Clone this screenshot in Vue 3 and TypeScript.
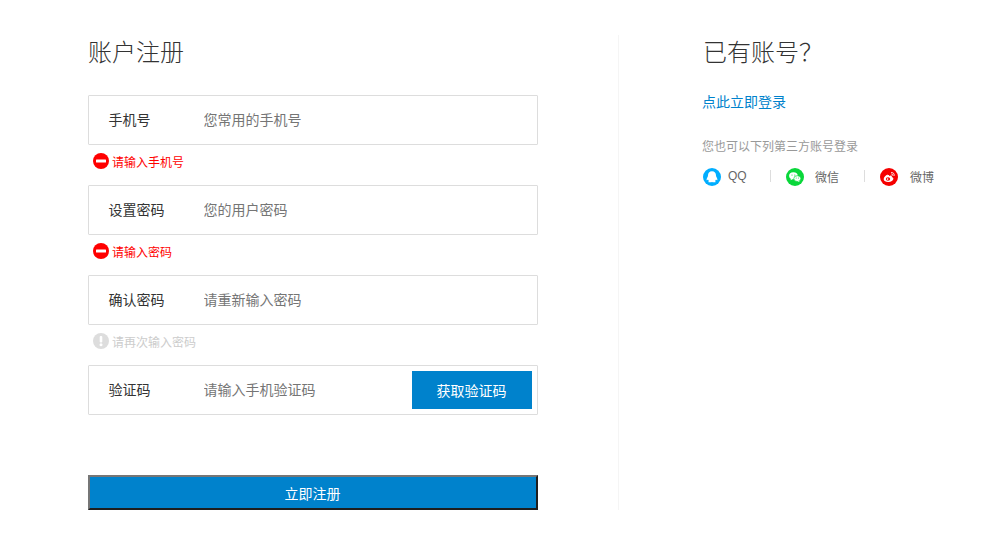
<script setup lang="ts">
interface Field { label: string; placeholder: string; tip?: string; tipKind?: 'error' | 'info'; code?: boolean }
const fields: Field[] = [
  { label: '手机号', placeholder: '您常用的手机号', tip: '请输入手机号', tipKind: 'error' },
  { label: '设置密码', placeholder: '您的用户密码', tip: '请输入密码', tipKind: 'error' },
  { label: '确认密码', placeholder: '请重新输入密码', tip: '请再次输入密码', tipKind: 'info' },
  { label: '验证码', placeholder: '请输入手机验证码', code: true },
]
</script>

<template>
  <div class="page">
    <form class="left" @submit.prevent>
      <h2 class="title">账户注册</h2>
      <div class="fields">
        <div v-for="f in fields" :key="f.label" class="field">
          <div class="box">
            <label class="label">{{ f.label }}</label>
            <input class="input" :placeholder="f.placeholder" />
            <button v-if="f.code" type="button" class="code">获取验证码</button>
          </div>
          <div class="tip" :class="f.tipKind">
            <template v-if="f.tip">
              <svg v-if="f.tipKind === 'error'" class="tip-icon" viewBox="0 0 16 16">
                <circle cx="8" cy="8" r="8" fill="#f00" />
                <rect x="3" y="6.5" width="10" height="3" rx="0.5" fill="#fff" />
              </svg>
              <svg v-else class="tip-icon" viewBox="0 0 16 16">
                <circle cx="8" cy="8" r="8" fill="#ddd" />
                <rect x="6.7" y="3" width="2.6" height="6.5" rx="1" fill="#fff" />
                <circle cx="8" cy="11.7" r="1.5" fill="#fff" />
              </svg>
              <span class="tip-text">{{ f.tip }}</span>
            </template>
          </div>
        </div>
      </div>
      <button class="submit" type="submit">立即注册</button>
    </form>

    <aside class="right">
      <h2 class="title">已有账号？</h2>
      <a class="login" href="#">点此立即登录</a>
      <p class="hint">您也可以下列第三方账号登录</p>
      <div class="socials">
        <a class="social qq" href="#">
          <svg class="s-icon" viewBox="0 0 18 18">
            <circle cx="9" cy="9" r="9" fill="#00aeff" />
            <path d="M9 3.2c-2.600 0-4 1.900-4 4.200 0 .9-.3 1.400-.7 2.100-.5.900-.9 1.900-.6 2.700.3.300.9-.200 1.300-.800.300.800.600 1.300 1.100 1.700-.500.200-.900.500-.700.900.300.400 2.600.500 3.600.100 1 .400 3.300.300 3.600-.100.200-.400-.200-.700-.700-.900.500-.400.800-.900 1.100-1.700.400.600 1 1.100 1.300.800.300-.800-.100-1.800-.600-2.700-.400-.700-.700-1.200-.700-2.100 0-2.300-1.400-4.200-4-4.200z" fill="#fff" />
          </svg>
          <span class="s-text">QQ</span>
        </a>
        <i class="sep"></i>
        <a class="social wechat" href="#">
          <svg class="s-icon" viewBox="0 0 18 18">
            <circle cx="9" cy="9" r="9" fill="#09d73a" />
            <ellipse cx="7.400" cy="7.800" rx="4.300" ry="3.500" fill="#fff" />
            <path d="M5 10.500 4.600 12.300 6.800 11z" fill="#fff" />
            <ellipse cx="11.300" cy="10.600" rx="3.500" ry="2.900" fill="#fff" stroke="#09d73a" stroke-width="0.700" />
            <path d="M13 12.600 13.500 14 11.800 13.200z" fill="#fff" />
            <circle cx="6" cy="7" r=".6" fill="#09d73a" />
            <circle cx="8.800" cy="7" r=".6" fill="#09d73a" />
            <circle cx="10.200" cy="10" r=".5" fill="#09d73a" />
            <circle cx="12.400" cy="10" r=".5" fill="#09d73a" />
          </svg>
          <span class="s-text s-text-wide">微信</span>
        </a>
        <i class="sep"></i>
        <a class="social weibo" href="#">
          <svg class="s-icon" viewBox="0 0 18 18">
            <circle cx="9" cy="9" r="9" fill="#f50000" />
            <path d="M7.800 6.400C5.600 7.300 3.600 9.300 3.700 11.200c.1 1.800 2.300 2.900 4.700 2.800 2.600-.1 5-1.500 5-3.200 0-1-1-1.500-1.700-1.700.4-.9.200-1.600-.6-1.700-.7-.1-1.500.200-2.100.500.2-.800 0-1.500-1.200-.500z" fill="#fff" />
            <ellipse cx="8" cy="11" rx="2.200" ry="1.700" fill="#f50000" />
            <circle cx="7.600" cy="11.100" r=".8" fill="#fff" />
            <path d="M11.500 4.500c1.700-.2 3.100 1.200 2.700 3M11.700 6c.9-.1 1.400.6 1.200 1.400" fill="none" stroke="#fff" stroke-width=".9" stroke-linecap="round" />
          </svg>
          <span class="s-text s-text-wide weibo-text">微博</span>
        </a>
      </div>
    </aside>
  </div>
</template>

<style scoped>
.page {
  display: flex;
  align-items: flex-start;
  padding: 35px 0 0 88px;
  font-family: "Liberation Sans", "Noto Sans CJK SC", sans-serif;
  font-size: 14px;
  color: #333;
}
.left {
  width: 450px;
  display: flex;
  flex-direction: column;
}
.title {
  margin: 0;
  height: 36px;
  line-height: 36px;
  font-size: 24px;
  font-weight: 300;
  color: #333;
}
.fields {
  margin-top: 24px;
  display: flex;
  flex-direction: column;
}
.field {
  display: flex;
  flex-direction: column;
}
.box {
  box-sizing: border-box;
  height: 50px;
  border: 1px solid #ddd;
  border-radius: 1px;
  display: flex;
  align-items: center;
  padding-left: 19.5px;
  padding-right: 5px;
}
.label {
  width: 95px;
  flex: none;
  margin-bottom: 2px;
  color: #333;
}
.input {
  flex: 1;
  min-width: 0;
  border: 0;
  outline: 0;
  padding: 0;
  font: inherit;
  background: transparent;
}
.input::placeholder {
  color: #757575;
  opacity: 1;
}
.code {
  flex: none;
  width: 120px;
  height: 38px;
  border: 0;
  padding: 0 1px 0 0;
  background: #0082cc;
  color: #fff;
  font: inherit;
}
.tip {
  height: 40px;
  padding: 8px 0 0 5px;
  box-sizing: border-box;
  display: flex;
  align-items: flex-start;
  gap: 3px;
  font-size: 12px;
  line-height: 18px;
  color: #f00;
}
.tip.info {
  color: #ccc;
}
.tip-icon {
  width: 16px;
  height: 16px;
  flex: none;
}
.tip-text {
  margin-top: 1px;
}
.submit {
  margin-top: 20px;
  width: 450px;
  height: 35px;
  padding: 0 1px 0 0;
  background: #0082cc;
  color: #fff;
  font: inherit;
  border-width: 2px;
  border-style: solid;
  border-color: #767676 #1e1e1e #1e1e1e #767676;
}
.right {
  margin-left: 80px;
  height: 475px;
  width: 330px;
  box-sizing: border-box;
  border-left: 1px solid #f5f5f5;
  padding-left: 84px;
  display: flex;
  flex-direction: column;
  align-items: flex-start;
}
.title + .login {
  margin-left: -1px;
}
.login {
  margin-top: 21px;
  line-height: 20px;
  color: #0082cc;
  text-decoration: none;
}
.hint {
  margin: 25px 0 0 -1px;
  line-height: 20px;
  font-size: 12px;
  color: #999;
}
.socials {
  margin: 10px 0 0;
  display: flex;
  align-items: center;
  height: 20px;
  font-size: 12px;
}
.social {
  display: flex;
  align-items: center;
  color: #666;
  text-decoration: none;
}
.s-icon {
  width: 18px;
  height: 18px;
  flex: none;
}
.s-text {
  margin-left: 7px;
  width: 42px;
  margin-bottom: 2px;
}
.s-text-wide {
  margin-left: 11px;
  width: 49px;
}
.weibo-text {
  margin-left: 12px;
}
.sep {
  width: 1px;
  height: 12px;
  margin: -2px 15px 0 0;
  background: #ddd;
}
</style>
